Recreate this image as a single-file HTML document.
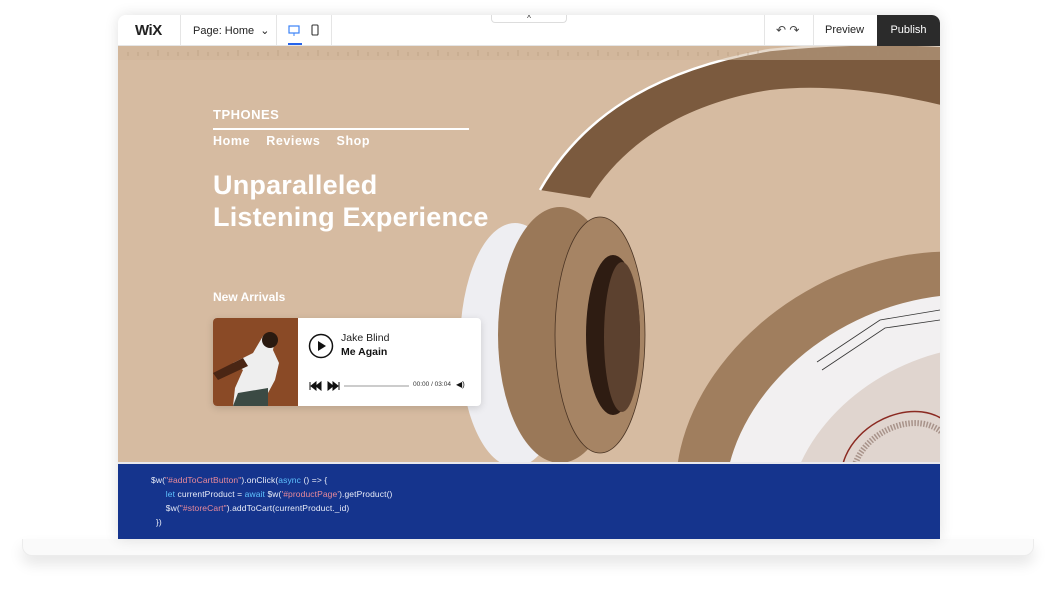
<!DOCTYPE html>
<html><head><meta charset="utf-8"><style>
*{margin:0;padding:0;box-sizing:border-box}
body{width:1057px;height:593px;background:#fff;font-family:"Liberation Sans",sans-serif;position:relative;overflow:hidden}
.base{position:absolute;left:22px;top:539px;width:1012px;height:17px;background:#fafafa;border:1px solid #ececec;border-top:none;border-radius:0 0 10px 10px;box-shadow:0 8px 14px rgba(0,0,0,.1)}
.frame{position:absolute;left:118px;top:15px;width:822px;height:524px;background:#fff;border-radius:8px 8px 0 0;box-shadow:0 0 14px rgba(0,0,0,.12);overflow:hidden}
.bar{position:absolute;left:0;top:0;width:822px;height:31px;background:#fff;border-bottom:1px solid #e5e5e5;font-size:11px;color:#222}
.bar .sep{position:absolute;top:0;width:1px;height:31px;background:#e5e5e5}
.pub{position:absolute;right:0;top:0;width:63px;height:31px;background:#2b2b2b;color:#fff;text-align:center;line-height:31px;font-size:11px;border-radius:0 8px 0 0}
.hero{position:absolute;left:0;top:31px;width:822px;height:416px;background:#d6bba1;overflow:hidden}
.code{position:absolute;left:0;top:449px;width:822px;height:75px;background:#15348d;color:#e8ecf8;font-family:"Liberation Sans",sans-serif;font-size:8.5px;line-height:14px;padding:9px 0 0 33px;letter-spacing:.1px}
.s{color:#e98a9a}.k{color:#5fc3ff}
.t{position:absolute;color:#fff;font-weight:bold}
</style></head><body>
<div class="base"></div>
<div class="frame">
 <div class="hero">
  <svg width="822" height="416" viewBox="118 46 822 416" style="position:absolute;left:0;top:0">
   <defs><clipPath id="c"><rect x="118" y="46" width="822" height="416"/></clipPath></defs>
   <g clip-path="url(#c)">
   <!-- headband -->
   <path d="M540 190 C580 120 650 70 770 50 C850 42 910 44 945 46 L945 106 C880 90 820 84 770 90 C690 102 625 140 590 198 Z" fill="#7b5a3e"/>
   <path d="M540 190 C580 120 650 70 770 50 C850 42 910 44 945 46" fill="none" stroke="#fff" stroke-width="2.5"/>
   <!-- right cup -->
   <ellipse cx="900" cy="445" rx="235" ry="180" transform="rotate(-28 900 445)" fill="#a07e5e"/>
   <ellipse cx="920" cy="462" rx="205" ry="155" transform="rotate(-28 920 462)" fill="#f2f0f1"/>
   <ellipse cx="950" cy="485" rx="170" ry="128" transform="rotate(-28 950 485)" fill="#e0d5cf"/>
   <ellipse cx="900" cy="462" rx="62" ry="46" transform="rotate(-30 900 462)" fill="none" stroke="#8b2a22" stroke-width="1.5"/>
   <ellipse cx="902" cy="465" rx="52" ry="38" transform="rotate(-30 902 465)" fill="none" stroke="#a8938a" stroke-width="6" stroke-dasharray="1.5 1.5"/>
   <path d="M817 362 L880 320 L940 310 M822 370 L885 328 L940 320" fill="none" stroke="#333" stroke-width="0.8"/>
   <!-- left cup shell -->
   <ellipse cx="515" cy="345" rx="55" ry="122" fill="#eeeef2"/>
   <!-- left cushion -->
   <ellipse cx="560" cy="335" rx="62" ry="128" fill="#9a7858"/>
   <ellipse cx="600" cy="335" rx="45" ry="118" fill="#a68464" stroke="#4a3424" stroke-width=".8"/>
   <ellipse cx="613" cy="335" rx="27" ry="80" fill="#2e1c12"/>
   <ellipse cx="622" cy="337" rx="18" ry="75" fill="#5c412f"/>
   </g>
  </svg>
  <svg width="822" height="14" style="position:absolute;left:0;top:0">
   <rect width="822" height="14" fill="#cdb398" opacity=".5"/>
   <path d="M10 6v4M20 6v4M30 6v4M40 4v6M50 6v4M60 6v4M70 6v4M80 4v6M90 6v4M100 6v4M110 6v4M120 4v6M130 6v4M140 6v4M150 6v4M160 4v6M170 6v4M180 6v4M190 6v4M200 4v6M210 6v4M220 6v4M230 6v4M240 4v6M250 6v4M260 6v4M270 6v4M280 4v6M290 6v4M300 6v4M310 6v4M320 4v6M330 6v4M340 6v4M350 6v4M360 4v6M370 6v4M380 6v4M390 6v4M400 4v6M410 6v4M420 6v4M430 6v4M440 4v6M450 6v4M460 6v4M470 6v4M480 4v6M490 6v4M500 6v4M510 6v4M520 4v6M530 6v4M540 6v4M550 6v4M560 4v6M570 6v4M580 6v4M590 6v4M600 4v6M610 6v4M620 6v4M630 6v4M640 4v6M650 6v4M660 6v4M670 6v4M680 4v6M690 6v4M700 6v4M710 6v4M720 4v6M730 6v4M740 6v4M750 6v4M760 4v6M770 6v4M780 6v4M790 6v4M800 4v6M810 6v4" stroke="#a88b70" stroke-width=".7" opacity=".6"/>
  </svg>
  <div class="t" style="left:95px;top:61px;font-size:13px;letter-spacing:.5px">TPHONES</div>
  <div style="position:absolute;left:95px;top:82px;width:256px;height:2px;background:#fff"></div>
  <div class="t" style="left:95px;top:88px;font-size:12.5px;letter-spacing:.6px;word-spacing:12px">Home Reviews Shop</div>
  <div class="t" style="left:95px;top:123px;font-size:27px;line-height:32px;letter-spacing:.2px">Unparalleled<br>Listening Experience</div>
  <div class="t" style="left:95px;top:244px;font-size:12px">New Arrivals</div>
  <div style="position:absolute;left:95px;top:272px;width:268px;height:88px;background:#fff;border-radius:4px;box-shadow:0 2px 8px rgba(0,0,0,.15);overflow:hidden">
   <div style="position:absolute;left:0;top:0;width:85px;height:88px;background:#8a4a26">
    <svg width="85" height="88"><path d="M20 45 L40 35 L50 18 Q58 12 62 22 L60 32 L66 45 L62 62 L55 75 L30 88 L20 88 L22 70 L30 52 Z" fill="#eee"/><circle cx="57" cy="22" r="8" fill="#2a1a10"/><path d="M25 75 L55 70 L55 88 L20 88Z" fill="#3b4a44"/><path d="M0 55 L30 40 L35 48 L5 62Z" fill="#4a2614"/></svg>
   </div>
   <svg width="28" height="28" style="position:absolute;left:94px;top:14px"><circle cx="14" cy="14" r="11.5" fill="none" stroke="#111" stroke-width="1.5"/><path d="M11 9 L19 14 L11 19Z" fill="#111"/></svg>
   <div style="position:absolute;left:128px;top:14px;font-size:10.5px;color:#222">Jake Blind</div>
   <div style="position:absolute;left:128px;top:28px;font-size:10.5px;font-weight:bold;color:#111">Me Again</div>
   <svg width="32" height="10" style="position:absolute;left:96px;top:63px"><path d="M1 1v8M2 5l5-4v8zM7 5l5-4v8z" fill="#111" stroke="#111" stroke-width="1"/><path d="M19 1v8l5-4zM24 1v8l5-4zM30 1v8" fill="#111" stroke="#111" stroke-width="1"/></svg>
   <div style="position:absolute;left:131px;top:67px;width:65px;height:1.5px;background:#ccc"></div>
   <div style="position:absolute;left:200px;top:63px;font-size:6.5px;color:#333">00:00 / 03:04</div>
   <div style="position:absolute;left:243px;top:62px;font-size:8px;color:#111">◀)</div>
  </div>
 </div>
 <div style="position:absolute;left:0;top:447px;width:822px;height:2px;background:#e8e8ee"></div>
 <div class="code">
  $w(<span class="s">"#addToCartButton"</span>).onClick(<span class="k">async</span> () => {<br>
  &nbsp;&nbsp;&nbsp;&nbsp;&nbsp;&nbsp;<span class="k">let</span> currentProduct = <span class="k">await</span> $w(<span class="s">'#productPage'</span>).getProduct()<br>
  &nbsp;&nbsp;&nbsp;&nbsp;&nbsp;&nbsp;$w(<span class="s">"#storeCart"</span>).addToCart(currentProduct._id)<br>
  &nbsp;&nbsp;})
 </div>
 <div class="bar">
  <div style="position:absolute;left:17px;top:7px;font-size:15px;font-weight:bold;letter-spacing:-.5px">WiX</div>
  <div class="sep" style="left:62px"></div>
  <div style="position:absolute;left:75px;top:9px">Page: Home &nbsp;⌄</div>
  <div class="sep" style="left:158px"></div>
  <svg width="40" height="31" style="position:absolute;left:168px;top:0"><rect x="3" y="11" width="10" height="7" fill="none" stroke="#3b82f6" stroke-width="1.2"/><path d="M8 18v3" stroke="#3b82f6"/><rect x="26" y="10" width="6" height="10" rx="1" fill="none" stroke="#333" stroke-width="1.1"/><rect x="2" y="28" width="14" height="2" fill="#2563eb"/></svg>
  <div class="sep" style="left:213px"></div>
  <div style="position:absolute;left:373px;top:-1px;width:76px;height:9px;border:1px solid #ddd;border-top:none;border-radius:0 0 4px 4px;font-size:8px;text-align:center;line-height:9px">^</div>
  <div class="sep" style="left:646px"></div>
  <div style="position:absolute;left:658px;top:8px;font-size:12px;color:#444">↶ ↷</div>
  <div class="sep" style="left:695px"></div>
  <div style="position:absolute;left:707px;top:9px">Preview</div>
  <div class="pub">Publish</div>
 </div>
</div>
</body></html>
